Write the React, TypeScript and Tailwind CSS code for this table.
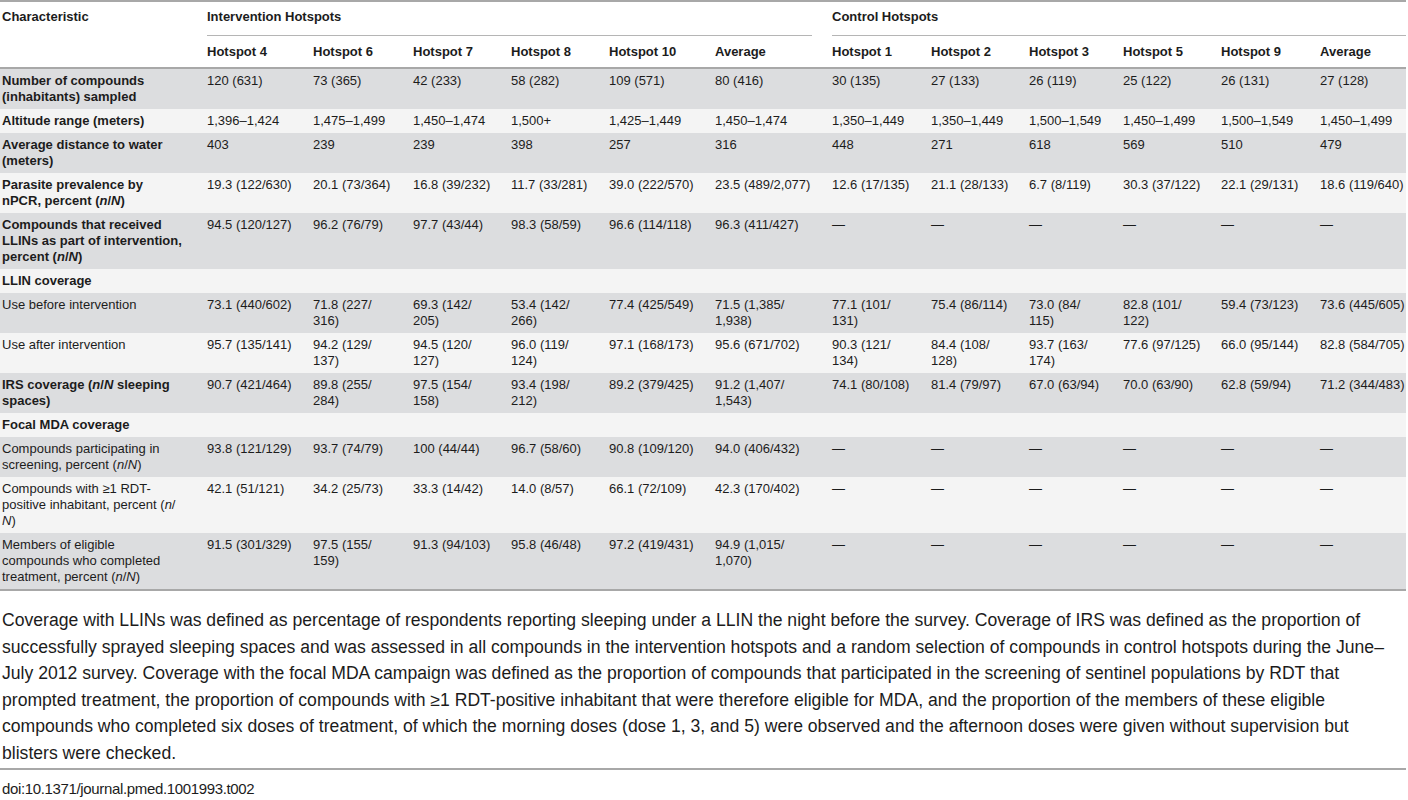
import React from 'react'

const NN = () => (
  <>
    (<i>n</i>/<wbr />
    <i>N</i>)
  </>
)

type Row = {
  label: React.ReactNode
  bold?: boolean
  section?: boolean
  values?: string[]
}

const dash = ['—', '—', '—', '—', '—', '—']

const rows: Row[] = [
  {
    label: 'Number of compounds (inhabitants) sampled',
    bold: true,
    values: ['120 (631)', '73 (365)', '42 (233)', '58 (282)', '109 (571)', '80 (416)', '30 (135)', '27 (133)', '26 (119)', '25 (122)', '26 (131)', '27 (128)'],
  },
  {
    label: 'Altitude range (meters)',
    bold: true,
    values: ['1,396–1,424', '1,475–1,499', '1,450–1,474', '1,500+', '1,425–1,449', '1,450–1,474', '1,350–1,449', '1,350–1,449', '1,500–1,549', '1,450–1,499', '1,500–1,549', '1,450–1,499'],
  },
  {
    label: 'Average distance to water (meters)',
    bold: true,
    values: ['403', '239', '239', '398', '257', '316', '448', '271', '618', '569', '510', '479'],
  },
  {
    label: (
      <>
        Parasite prevalence by nPCR, percent <NN />
      </>
    ),
    bold: true,
    values: ['19.3 (122/630)', '20.1 (73/364)', '16.8 (39/232)', '11.7 (33/281)', '39.0 (222/570)', '23.5 (489/2,077)', '12.6 (17/135)', '21.1 (28/133)', '6.7 (8/119)', '30.3 (37/122)', '22.1 (29/131)', '18.6 (119/640)'],
  },
  {
    label: (
      <>
        Compounds that received LLINs as part of intervention, percent <NN />
      </>
    ),
    bold: true,
    values: ['94.5 (120/127)', '96.2 (76/79)', '97.7 (43/44)', '98.3 (58/59)', '96.6 (114/118)', '96.3 (411/427)', ...dash],
  },
  { label: 'LLIN coverage', bold: true, section: true },
  {
    label: 'Use before intervention',
    values: ['73.1 (440/602)', '71.8 (227/316)', '69.3 (142/205)', '53.4 (142/266)', '77.4 (425/549)', '71.5 (1,385/1,938)', '77.1 (101/131)', '75.4 (86/114)', '73.0 (84/115)', '82.8 (101/122)', '59.4 (73/123)', '73.6 (445/605)'],
  },
  {
    label: 'Use after intervention',
    values: ['95.7 (135/141)', '94.2 (129/137)', '94.5 (120/127)', '96.0 (119/124)', '97.1 (168/173)', '95.6 (671/702)', '90.3 (121/134)', '84.4 (108/128)', '93.7 (163/174)', '77.6 (97/125)', '66.0 (95/144)', '82.8 (584/705)'],
  },
  {
    label: (
      <>
        IRS coverage (<i>n</i>/<i>N</i> sleeping spaces)
      </>
    ),
    bold: true,
    values: ['90.7 (421/464)', '89.8 (255/284)', '97.5 (154/158)', '93.4 (198/212)', '89.2 (379/425)', '91.2 (1,407/1,543)', '74.1 (80/108)', '81.4 (79/97)', '67.0 (63/94)', '70.0 (63/90)', '62.8 (59/94)', '71.2 (344/483)'],
  },
  { label: 'Focal MDA coverage', bold: true, section: true },
  {
    label: (
      <>
        Compounds participating in screening, percent <NN />
      </>
    ),
    values: ['93.8 (121/129)', '93.7 (74/79)', '100 (44/44)', '96.7 (58/60)', '90.8 (109/120)', '94.0 (406/432)', ...dash],
  },
  {
    label: (
      <>
        Compounds with ≥1 RDT-positive inhabitant, percent <NN />
      </>
    ),
    values: ['42.1 (51/121)', '34.2 (25/73)', '33.3 (14/42)', '14.0 (8/57)', '66.1 (72/109)', '42.3 (170/402)', ...dash],
  },
  {
    label: (
      <>
        Members of eligible compounds who completed treatment, percent <NN />
      </>
    ),
    values: ['91.5 (301/329)', '97.5 (155/159)', '91.3 (94/103)', '95.8 (46/48)', '97.2 (419/431)', '94.9 (1,015/1,070)', ...dash],
  },
]

const intervention = ['Hotspot 4', 'Hotspot 6', 'Hotspot 7', 'Hotspot 8', 'Hotspot 10', 'Average']
const control = ['Hotspot 1', 'Hotspot 2', 'Hotspot 3', 'Hotspot 5', 'Hotspot 9', 'Average']

// slash gets a break chance like in the journal layout
const cellText = (v: string) => v.replace('/', '/\u200B')

const App = () => {
  return (
    <div className="w-[1408px] bg-white text-[#1c1c1c] font-['Liberation_Sans',Arial,sans-serif]">
      <table className="w-[1406px] table-fixed border-collapse border-t-2 border-b-2 border-[#a8a8a8] text-[13px] leading-[16px]">
        <colgroup>
          <col className="w-[205px]" />
          <col className="w-[106px]" />
          <col className="w-[100px]" />
          <col className="w-[98px]" />
          <col className="w-[98px]" />
          <col className="w-[106px]" />
          <col className="w-[117px]" />
          <col className="w-[99px]" />
          <col className="w-[98px]" />
          <col className="w-[94px]" />
          <col className="w-[98px]" />
          <col className="w-[99px]" />
          <col className="w-[88px]" />
        </colgroup>
        <thead>
          <tr>
            <th rowSpan={2} className="pl-[2px] pr-[21px] pt-[7px] align-top text-left font-bold border-b-2 border-[#a8a8a8]">
              Characteristic
            </th>
            <th colSpan={6} className="pl-[2px] pr-[18px] pt-[7px] text-left font-bold align-top">
              <div className="pb-[10px] border-b border-[#b5b5b5]">Intervention Hotspots</div>
            </th>
            <th colSpan={6} className="pl-[2px] pt-[7px] text-left font-bold align-top">
              <div className="pb-[10px] border-b border-[#b5b5b5]">Control Hotspots</div>
            </th>
          </tr>
          <tr className="border-b-2 border-[#a8a8a8]">
            {[...intervention, ...control].map((h, i) => (
              <th key={i} className="pl-[2px] pr-[18px] pt-[8px] pb-[7px] text-left font-bold align-top whitespace-nowrap">
                {h}
              </th>
            ))}
          </tr>
        </thead>
        <tbody>
          {rows.map((r, i) => (
            <tr key={i} className={i % 2 === 0 ? 'bg-[#dcdddf]' : 'bg-[#f4f4f4]'}>
              <td className={`pl-[2px] pr-[21px] py-[4px] align-top ${r.bold ? 'font-bold' : ''}`}>{r.label}</td>
              {r.section
                ? <td colSpan={12} className="py-[4px]" />
                : r.values!.map((v, j) => (
                    <td key={j} className={`pl-[2px] py-[4px] align-top ${j === 11 ? 'pr-0' : 'pr-[18px]'}`}>
                      {cellText(v)}
                    </td>
                  ))}
            </tr>
          ))}
        </tbody>
      </table>

      <p className="w-[1406px] pl-[2px] pt-[16px] pb-[2px] text-[17.6px] leading-[26.5px] border-b-2 border-[#a8a8a8]">
        Coverage with LLINs was defined as percentage of respondents reporting sleeping under a LLIN the night before the survey. Coverage of IRS was defined as the proportion of successfully sprayed sleeping spaces and was assessed in all compounds in the intervention hotspots and a random selection of compounds in control hotspots during the June–<wbr />July 2012 survey. Coverage with the focal MDA campaign was defined as the proportion of compounds that participated in the screening of sentinel populations by RDT that prompted treatment, the proportion of compounds with ≥1 RDT-positive inhabitant that were therefore eligible for MDA, and the proportion of the members of these eligible compounds who completed six doses of treatment, of which the morning doses (dose 1, 3, and 5) were observed and the afternoon doses were given without supervision but blisters were checked.
      </p>
      <div className="pl-[2px] pt-[10px] text-[15px] leading-[18px] tracking-[-0.35px]">doi:10.1371/journal.pmed.1001993.t002</div>
    </div>
  )
}

export default App
